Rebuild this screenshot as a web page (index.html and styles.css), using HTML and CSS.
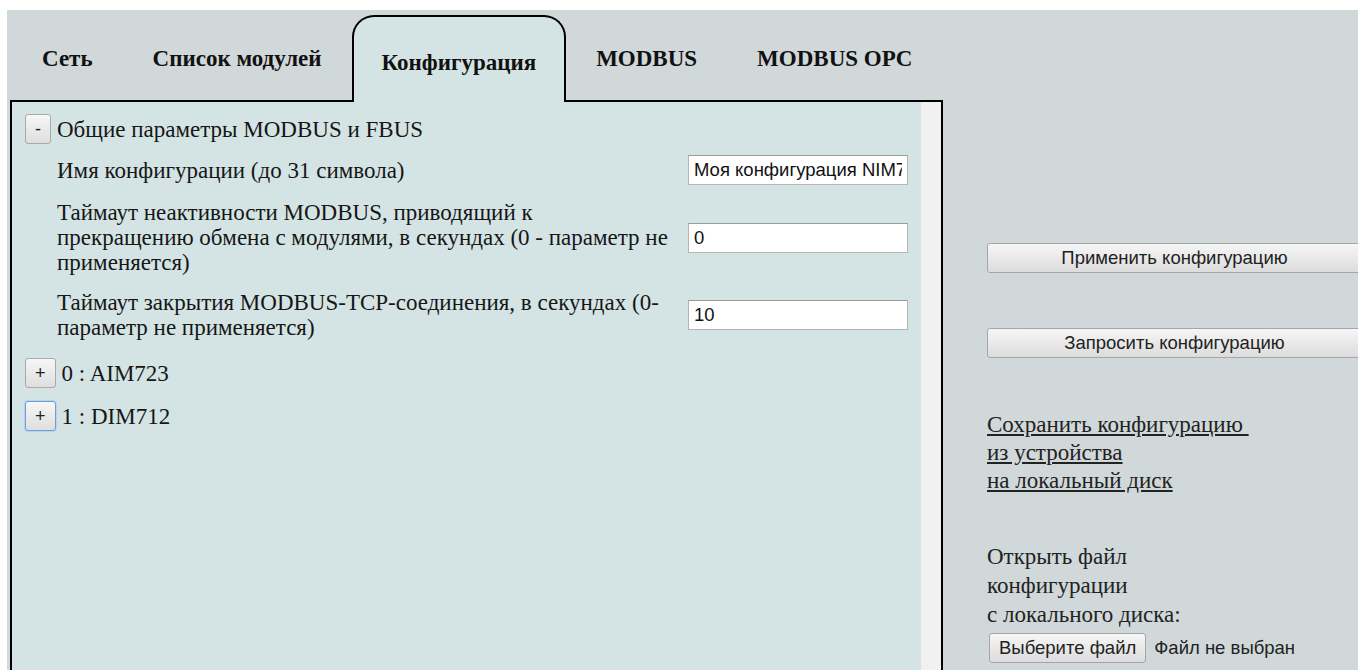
FILE: index.html
```html
<!DOCTYPE html>
<html lang="ru">
<head>
<meta charset="utf-8">
<title>Конфигурация</title>
<link rel="stylesheet" href="styles.css">
</head>
<body>
<div class="page">
  <div class="workspace">
    <nav class="tabs">
      <div class="tab">Сеть</div>
      <div class="tab">Список модулей</div>
      <div class="tab tab-active">Конфигурация</div>
      <div class="tab">MODBUS</div>
      <div class="tab">MODBUS OPC</div>
    </nav>
    <div class="panel">
      <div class="panel-body">
        <div class="group">
          <div class="group-head"><button class="toggle" type="button">-</button><span class="group-title">Общие параметры MODBUS и FBUS</span></div>
          <div class="params">
            <div class="param">
              <div class="param-label">Имя конфигурации (до 31 символа)</div>
              <input class="param-input" type="text" value="Моя конфигурация NIM741">
            </div>
            <div class="param">
              <div class="param-label">Таймаут неактивности MODBUS, приводящий к прекращению обмена с модулями, в секундах (0 - параметр не применяется)</div>
              <input class="param-input" type="text" value="0">
            </div>
            <div class="param">
              <div class="param-label">Таймаут закрытия MODBUS-TCP-соединения, в секундах (0-параметр не применяется)</div>
              <input class="param-input" type="text" value="10">
            </div>
          </div>
        </div>
        <div class="group">
          <div class="group-head"><button class="toggle" type="button">+</button><span class="group-title">0 : AIM723</span></div>
        </div>
        <div class="group">
          <div class="group-head"><button class="toggle toggle-focus" type="button">+</button><span class="group-title">1 : DIM712</span></div>
        </div>
      </div>
      <div class="scroll-track"></div>
    </div>
  </div>
  <aside class="sidebar">
    <button class="action" type="button">Применить конфигурацию</button>
    <button class="action action-second" type="button">Запросить конфигурацию</button>
    <a class="save-link" href="#">Сохранить конфигурацию&nbsp;<br>из устройства<br>на локальный диск</a>
    <div class="open-text">Открыть файл<br>конфигурации<br>с локального диска:</div>
    <div class="file-row"><span class="file-button">Выберите файл</span><span class="file-name">Файл не выбран</span></div>
  </aside>
</div>
</body>
</html>
```

FILE: styles.css
```css
html, body {
  margin: 0;
  padding: 0;
  background: #ffffff;
  overflow: hidden;
}

body {
  padding: 10px 0 0 7px;
  font-family: "Liberation Serif", "Times New Roman", serif;
  color: #161616;
}

.page {
  display: flex;
  align-items: flex-start;
  background: #d0d8d9;
  height: 720px;
  width: 1400px;
}

/* left column: tab strip with the panel below */
.workspace {
  margin-left: 3px;
  width: 933px;
  height: 100%;
  display: flex;
  flex-direction: column;
}

.tabs {
  display: flex;
  align-items: flex-end;
  height: 90px;
  padding-left: 2px;
  position: relative;
  z-index: 1;
}

.tab {
  height: 85px;
  box-sizing: border-box;
  padding: 29px 28px 0;
  border: 2px solid transparent;
  border-bottom: 0;
  font-size: 23px;
  font-weight: bold;
  line-height: 26px;
  color: #111;
  white-space: nowrap;
}

.tab-active {
  height: 87px;
  margin-bottom: -2px;
  padding-top: 33px;
  border-color: #000;
  border-radius: 22px 22px 0 0;
  background: #d4e4e4;
}

.panel {
  flex: 1;
  display: flex;
  border: 2px solid #000;
  border-bottom: 0;
  background: #d4e4e4;
}

.panel-body {
  flex: 1;
  padding: 13px 13px 0;
}

.scroll-track {
  width: 20px;
  background: #f1f1f1;
}

.group-head {
  display: flex;
  align-items: center;
  height: 28px;
  font-size: 23px;
  line-height: 25px;
}

.group + .group {
  margin-top: 15px;
}

.group-title {
  margin-left: 6px;
  white-space: nowrap;
}

.toggle {
  height: 30px;
  padding: 0 9px;
  font-family: "Liberation Sans", Arial, sans-serif;
  font-size: 18px;
  color: #222;
  border: 1px solid #a9a9a9;
  border-radius: 3px;
  background: linear-gradient(#f7f7f7, #dedede);
}

.toggle-focus {
  border-color: #6d9fd6;
  box-shadow: 0 0 0 1px #b9d2ee;
}

.params {
  margin: 12px 0 19px 32px;
  display: flex;
  flex-direction: column;
  gap: 15px;
}

.param {
  display: grid;
  grid-template-columns: 616px 220px;
  column-gap: 15px;
  align-items: center;
}

.param-label {
  font-size: 23px;
  line-height: 25px;
}

.param-input {
  box-sizing: border-box;
  width: 220px;
  height: 30px;
  margin: 0;
  padding: 0 5px;
  font-family: "Liberation Sans", Arial, sans-serif;
  font-size: 18.5px;
  color: #111;
  background: #fff;
  border: 1px solid #b5b5b5;
  border-top-color: #9a9a9a;
}

/* right column with actions */
.sidebar {
  margin-left: 44px;
  padding-top: 233px;
  display: flex;
  flex-direction: column;
  align-items: flex-start;
}

.action {
  width: 375px;
  height: 30px;
  font-family: "Liberation Sans", Arial, sans-serif;
  font-size: 18.5px;
  color: #222;
  border: 1px solid #a6a6a6;
  border-radius: 3px;
  background: linear-gradient(#f6f6f6, #dcdcdc);
}

.action-second {
  margin-top: 55px;
}

.save-link {
  margin-top: 53px;
  font-size: 23px;
  line-height: 28px;
  color: #222;
  text-decoration: underline;
}

.open-text {
  margin-top: 47px;
  font-size: 23px;
  line-height: 29px;
  color: #222;
}

.file-row {
  margin-top: 4px;
  display: flex;
  align-items: center;
  font-family: "Liberation Sans", Arial, sans-serif;
  font-size: 18.5px;
  color: #222;
}

.file-button {
  box-sizing: border-box;
  height: 30px;
  margin-left: 2px;
  padding: 0 9px;
  display: flex;
  align-items: center;
  border: 1px solid #a6a6a6;
  border-radius: 3px;
  background: linear-gradient(#f6f6f6, #dcdcdc);
}

.file-name {
  margin-left: 8px;
}
```
